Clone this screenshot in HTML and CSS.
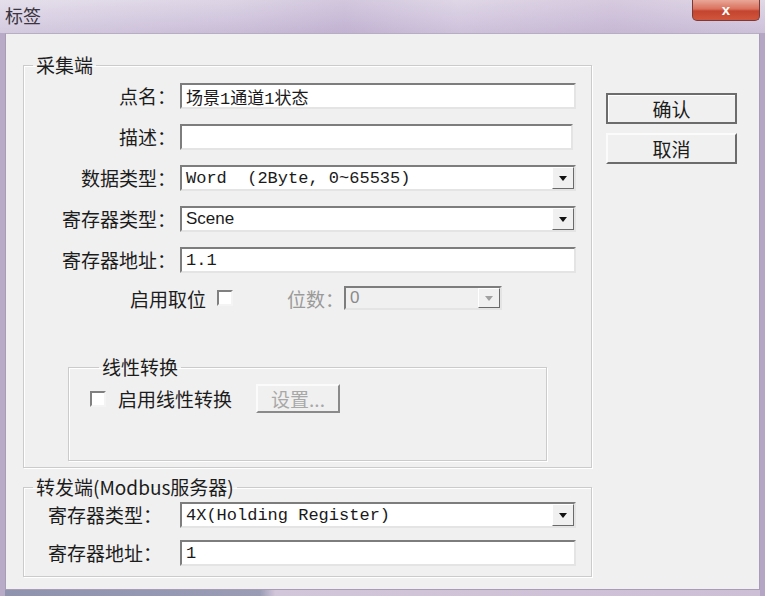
FILE: index.html
```html
<!DOCTYPE html>
<html lang="zh-CN">
    <head>
        <meta charset="UTF-8">
        <title>标签</title>
        <link rel="stylesheet" href="styles.css">
    </head>
    <body>
        <div class="window">
            <div class="titlebar">
                <span class="title">标签</span>
                <div class="close">x</div>
            </div>
            <div class="client">
                <div class="forms">
                    <fieldset class="group group-source">
                        <legend>采集端</legend>
                        <div class="field">
                            <span class="label">点名：</span>
                            <div class="edit">场景1通道1状态</div>
                        </div>
                        <div class="field">
                            <span class="label">描述：</span>
                            <div class="edit edit-short"></div>
                        </div>
                        <div class="field">
                            <span class="label">数据类型：</span>
                            <div class="edit combo">
                                <span>Word&nbsp;&nbsp;(2Byte, 0~65535)</span>
                                <span class="arrow"></span>
                            </div>
                        </div>
                        <div class="field">
                            <span class="label">寄存器类型：</span>
                            <div class="edit combo">
                                <span class="sans">Scene</span>
                                <span class="arrow"></span>
                            </div>
                        </div>
                        <div class="field">
                            <span class="label">寄存器地址：</span>
                            <div class="edit">1.1</div>
                        </div>
                        <div class="bit-row">
                            <span>启用取位</span>
                            <span class="check check-bit"></span>
                            <span class="disabled-text">位数：</span>
                            <div class="edit combo combo-disabled">
                                <span class="sans">0</span>
                                <span class="arrow"></span>
                            </div>
                        </div>
                        <fieldset class="group group-linear">
                            <legend>线性转换</legend>
                            <div class="linear-row">
                                <span class="check"></span>
                                <span class="linear-label">启用线性转换</span>
                                <div class="button button-disabled">设置...</div>
                            </div>
                        </fieldset>
                    </fieldset>
                    <fieldset class="group group-forward">
                        <legend>转发端(Modbus服务器)</legend>
                        <div class="field">
                            <span class="label">寄存器类型：</span>
                            <div class="edit combo">
                                <span>4X(Holding Register)</span>
                                <span class="arrow"></span>
                            </div>
                        </div>
                        <div class="field">
                            <span class="label">寄存器地址：</span>
                            <div class="edit">1</div>
                        </div>
                    </fieldset>
                </div>
                <div class="buttons">
                    <div class="button button-default">确认</div>
                    <div class="button">取消</div>
                </div>
            </div>
        </div>
    </body>
</html>
```

FILE: styles.css
```css
*
{
    margin: 0;
    padding: 0;
    box-sizing: border-box;
}

body
{
    font-family: "Noto Sans CJK SC", "Liberation Sans", sans-serif;
    font-size: 19px;
    color: #1c1c1c;
    background: #c4b8d2;
}

.window
{
    height: 596px;
    width: 765px;
    display: flex;
    flex-direction: column;

    background:
        linear-gradient( 90deg, #b7abc8 0px, #b7abc8 5px, transparent 5px, transparent 760px, #b4a6c4 760px ),
        linear-gradient( 90deg, #8f93ad 0%, #9a9cb6 34%, #d2c6da 36%, #cdbfd6 100% );
}

.titlebar
{
    height: 33px;
    display: flex;
    align-items: flex-start;
    justify-content: space-between;
    padding: 0 5px 0 5px;

    background:
        linear-gradient( 90deg, rgba( 255, 255, 255, 0.25 ) 0%, rgba( 230, 220, 238, 0.1 ) 30%, rgba( 180, 160, 200, 0.25 ) 45%, rgba( 235, 225, 240, 0.2 ) 60%, rgba( 200, 180, 210, 0.3 ) 80%, rgba( 255, 255, 255, 0.1 ) 100% ),
        linear-gradient( 180deg, #dcd4e4 0%, #cfc4dc 60%, #c6b9d4 100% );
}

.title
{
    margin-top: 3px;
    font-size: 18px;
    line-height: 24px;
    color: #3a3540;
}

.close
{
    height: 21px;
    width: 68px;
    border: 1px solid #7a3b38;
    border-top: none;
    border-radius: 0 0 5px 5px;

    font-family: "Liberation Sans", sans-serif;
    font-size: 15px;
    font-weight: bold;
    line-height: 19px;
    text-align: center;
    color: #ffffff;

    background: linear-gradient( 180deg, #e9a797 0%, #d9715c 45%, #c4442f 55%, #d0553c 100% );
}

.client
{
    height: 557px;
    margin: 0 5px;
    padding: 20px 22px 0 17px;
    display: flex;
    gap: 14px;

    background: #f0f0f0;
    border: 1px solid #a89cb6;
    border-top-color: #b8aec4;
}

.forms
{
    width: 569px;
    display: flex;
    flex-direction: column;
}

.group
{
    min-width: 0;
    border: 1px solid #cbcbcb;
    box-shadow: 1px 1px 0 #ffffff, inset 1px 1px 0 #ffffff;
}

.group legend
{
    margin-left: 9px;
    padding: 0 3px;
    line-height: 22px;
}

.group-source
{
    padding: 7px 0 6px 0;
}

.group-linear
{
    width: 479px;
    margin: 46px 0 0 44px;
    padding: 6px 0 47px 21px;
}

.group-forward
{
    margin-top: 8px;
    padding: 4px 0 10px 0;
}

.field
{
    display: grid;
    grid-template-columns: 152px 396px;
    column-gap: 4px;
    height: 26px;
    align-items: center;
}

.field + .field
{
    margin-top: 15px;
}

.group-forward .field + .field
{
    margin-top: 12px;
}

.label
{
    text-align: right;
    line-height: 26px;
    white-space: nowrap;
}

.group-forward .label
{
    text-align: left;
    padding-left: 24px;
}

.edit
{
    height: 26px;
    display: flex;
    align-items: center;
    padding-left: 4px;

    font-family: "Liberation Mono", "Noto Sans CJK SC", monospace;
    font-size: 17px;
    color: #1a1a1a;
    white-space: pre;

    background: #ffffff;
    border: 2px solid;
    border-color: #7d7d7d #e4e4e4 #e4e4e4 #7d7d7d;
}

.edit-short
{
    width: 393px;
}

.sans
{
    font-family: "Liberation Sans", sans-serif;
}

.combo
{
    justify-content: space-between;
    padding-right: 0;
}

.arrow
{
    height: 100%;
    width: 22px;
    display: flex;
    align-items: center;
    justify-content: center;

    background: #f0f0f0;
    border: 1px solid;
    border-color: #ffffff #6a6a6a #6a6a6a #ffffff;
}

.arrow::after
{
    content: "";
    border-top: 5px solid #111111;
    border-left: 4px solid transparent;
    border-right: 4px solid transparent;
}

.combo-disabled
{
    width: 158px;
    height: 24px;
    color: #8a8a8a;
    background: #f0f0f0;
}

.combo-disabled .arrow::after
{
    border-top-color: #a0a0a0;
}

.bit-row
{
    display: flex;
    align-items: center;
    height: 24px;
    margin: 13px 0 0 106px;
}

.check
{
    height: 16px;
    width: 16px;
    flex: none;

    background: #ffffff;
    border: 2px solid;
    border-color: #808080 #f4f4f4 #f4f4f4 #808080;
}

.check-bit
{
    margin-left: 11px;
}

.disabled-text
{
    margin-left: 54px;
    color: #9a9a9a;
}

.linear-row
{
    display: flex;
    align-items: center;
    height: 29px;
}

.linear-label
{
    margin-left: 12px;
}

.buttons
{
    display: flex;
    flex-direction: column;
    gap: 9px;
    margin-top: 39px;
}

.button
{
    height: 31px;
    width: 131px;
    display: flex;
    align-items: center;
    justify-content: center;

    background: #f0f0f0;
    border: 2px solid;
    border-color: #fbfbfb #6c6c6c #6c6c6c #fbfbfb;
}

.button-default
{
    border-color: #6c6c6c;
    box-shadow: inset 1px 1px 0 #ffffff;
}

.button-disabled
{
    height: 29px;
    width: 84px;
    margin-left: 24px;
    color: #a8a8a8;
    border-color: #fbfbfb #8a8a8a #8a8a8a #fbfbfb;
}
```
